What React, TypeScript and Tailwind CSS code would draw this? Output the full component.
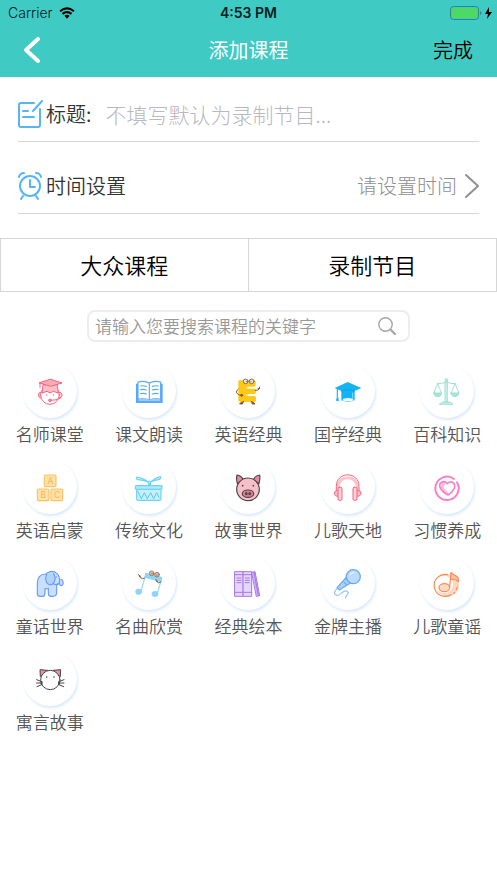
import { ReactNode } from "react";

const pink = "#f5627d";
const blue = "#5aa9f8";
const sky = "#6fd0f8";
const mint = "#8fdccd";
const brown = "#8a5530";
const dark = "#4a4648";

function Glyph({ children }: { children: ReactNode }) {
  return (
    <svg
      viewBox="0 0 84 84"
      className="size-7 overflow-visible"
      fill="none"
      strokeWidth="3.5"
      strokeLinecap="round"
      strokeLinejoin="round"
      aria-hidden="true"
    >
      {children}
    </svg>
  );
}

const Teacher = (
  <Glyph>
    <g stroke={pink} strokeWidth="3">
      <path d="M15 46C5 44 3 62 15 64M70 46c10-2 12 16 0 18" fill="#fbc9d0" />
      <circle cx="42" cy="54" r="28" fill="#fff" />
      <path d="M21 24l-3 24 15-5 9 5 10-5 15 5-3-24z" fill="#fbc0c8" />
      <path d="M44 7L78 18 44 28 10 18z" fill="#f9aab5" />
      <path d="M12 19v12" />
      <path d="M45 70q16 1 29-8" />
      <circle cx="42" cy="70" r="4" fill="#f9aab5" />
    </g>
    <circle cx="32" cy="54" r="2" fill={pink} />
    <circle cx="53" cy="54" r="2" fill={pink} />
  </Glyph>
);

const Book = (
  <Glyph>
    <path d="M3 20h80v58H3z" fill={blue} />
    <path
      d="M9 15q20-5 34 3 14-8 34-3v52q-20-5-34 3-14-8-34-3z"
      fill="#fff"
      stroke={blue}
    />
    <path d="M43 18v50" stroke={blue} />
    <path
      d="M17 27q9-2 17 1M17 38q9-2 17 1M17 50q9-2 17 1M52 28q9-3 17-1M52 39q9-3 17-1M52 51q9-3 17-1"
      stroke={blue}
    />
    <path d="M11 66q18-5 32 3 14-8 32-3v6H11z" fill="#9dccfb" />
  </Glyph>
);

const LetterMonster = (
  <Glyph>
    <path
      d="M15 10h44q6 0 6 6v8q0 5-6 5H37v6h24q5 0 5 6v5q0 5-5 5H37v6h23q6 0 6 6v6q0 6-6 6H19q-6 0-6-6V13q0-3 2-3z"
      fill="#fdc916"
    />
    <path d="M39 29v7M39 51v6" stroke="#eda80b" strokeWidth="2" />
    <g stroke={brown} strokeWidth="3">
      <path d="M13 36C2 44 8 53 20 55M64 40q10 1 12-5l-4-1m4 1l1-5" />
      <path d="M29 73l-4 8h-8q2-5 8-6M52 73l3 8h8q-2-5-8-6" fill={brown} />
      <circle cx="23" cy="55" r="3" fill={brown} />
    </g>
    <g stroke="#7f6a55" strokeWidth="3" fill="#f6ead0">
      <circle cx="35" cy="13" r="7" />
      <circle cx="53" cy="13" r="7" />
    </g>
    <circle cx="37" cy="13" r="1.500" fill={dark} />
    <circle cx="51" cy="13" r="1.500" fill={dark} />
  </Glyph>
);

const GradCap = (
  <Glyph>
    <path d="M41 15L82 33 62 42v28q-20 8-40 0V42L2 33z" fill="#14b4f4" />
    <path d="M22 43q20-10 40 0" stroke="#0a93d4" strokeWidth="2" />
    <ellipse cx="42" cy="68" rx="16" ry="5" fill="#e9f8ff" />
    <path d="M10 36v20" stroke="#14b4f4" />
    <path d="M10 57l-3 14h6z" fill="#14b4f4" stroke="#14b4f4" strokeWidth="2" />
    <path d="M56 48v15" stroke="#7cd7fb" />
  </Glyph>
);

const Scales = (
  <Glyph>
    <g stroke={mint} strokeWidth="2.500">
      <path d="M37 14h6v62h-6z" fill="#c8f0e8" />
      <circle cx="40" cy="9" r="4" fill="#c8f0e8" />
      <path d="M14 20q13 1 23-4M66 20q-13 1-23-4" />
      <path d="M14 20L3 47M14 20l11 27M66 20L55 47M66 20l11 27" />
      <path d="M2 48h24q-2 11-12 11T2 48zM54 48h24q-2 11-12 11T54 48z" fill="#a9e6da" />
      <path d="M29 75h22l9 7H20z" fill="#c8f0e8" />
    </g>
  </Glyph>
);

const Blocks = (
  <Glyph>
    <g fill="#fde2ab" stroke="#fbc264">
      <rect x="25" y="6" width="35" height="35" rx="4" />
      <rect x="4" y="48" width="35" height="35" rx="4" />
      <rect x="45" y="48" width="35" height="35" rx="4" />
    </g>
    <g
      className="font-['Inter',sans-serif] font-medium"
      fill="#f9b955"
      fontSize="25"
      textAnchor="middle"
    >
      <text x="43" y="33">A</text>
      <text x="22" y="75">B</text>
      <text x="63" y="75">C</text>
    </g>
  </Glyph>
);

const Drum = (
  <Glyph>
    <g stroke={sky}>
      <path d="M5 49h73v29q0 4-5 4H10q-5 0-5-4z" fill="#c3f1fc" />
      <path d="M8 55l11 22 9-18 9 18 10-18 9 18 9-18 7 14" stroke="#5fc3f3" strokeWidth="3" />
      <rect x="1" y="38" width="80" height="11" rx="3" fill="#aeeafb" />
      <path d="M5 12q-3 5 3 8 16 0 33 8Q27 16 5 12z" fill="#c3f1fc" />
      <path d="M76 11q3 5-4 9-13 1-27 8 12-12 31-17z" fill="#c3f1fc" />
      <circle cx="43" cy="28" r="4" fill="#fff" />
      <path d="M40 37l3-7 5 7" />
    </g>
  </Glyph>
);

const Pig = (
  <Glyph>
    <g stroke={dark}>
      <path d="M10 32Q6 16 9 6q13 2 19 14zM75 32q4-16 2-26-13 2-19 14z" fill="#e98ba0" />
      <circle cx="42" cy="49" r="34" fill="#f6bfca" />
      <ellipse cx="42" cy="62" rx="17" ry="11" fill="#dd7f92" />
    </g>
    <ellipse cx="37" cy="62" rx="4" ry="5" fill={dark} />
    <ellipse cx="47" cy="62" rx="4" ry="5" fill={dark} />
    <circle cx="26" cy="38" r="2.500" fill={dark} />
    <circle cx="58" cy="38" r="2.500" fill={dark} />
  </Glyph>
);

const Headphones = (
  <Glyph>
    <path d="M12 44C12 4 70 4 70 44" stroke="#fcc5cd" strokeWidth="9" />
    <g stroke={pink} strokeWidth="3">
      <path d="M7 52V40C7-6 75-6 75 40v12" />
      <path d="M12 52q-11 0-11 9t11 9M69 52q12 0 12 9t-12 9" fill="#fbb9c3" />
      <rect x="12" y="43" width="12" height="39" rx="4" fill="#fcd3d9" />
      <rect x="57" y="43" width="12" height="39" rx="4" fill="#fcd3d9" />
    </g>
  </Glyph>
);

const HeartRing = (
  <Glyph>
    <g stroke="#f97fc6">
      <path d="M32 31Q20 45 43 62" stroke="#fcb8df" strokeWidth="8" />
      <path d="M63 18A35 35 0 1 0 72 28" strokeWidth="6" />
      <path
        d="M45 66C22 54 15 37 24 29q10-8 19 3 10-10 19-1c9 9-1 25-17 35z"
        strokeWidth="5"
      />
    </g>
  </Glyph>
);

const Elephant = (
  <Glyph>
    <g stroke="#6a9cf5" fill="#c8e0fd">
      <path d="M31 15Q4 14 4 46v28q0 8 9 8h7q7 0 7-10V59q5 2 10-1v14q0 10 8 10h6q10 0 11-10V50q5-4 8-10 0 11 6 10 7-2 5-12-1-6-6-7" />
      <path d="M33 13Q49 1 63 14q10 8 7 28-10 9-21 1" />
      <path d="M33 13q-7 14-1 28 11 14 22-1 8-14-2-26" fill="#b2d3fc" />
    </g>
    <circle cx="61" cy="24" r="2" fill="#6a9cf5" />
  </Glyph>
);

const MusicNotes = (
  <Glyph>
    <path d="M33 13L18 66M80 28L67 74" stroke="#9fdbf8" strokeWidth="4" />
    <path d="M32 11l50 13-4 15-50-13z" fill="#8bd6fa" />
    <ellipse cx="11" cy="68" rx="10" ry="9" fill="#8fd4f8" />
    <ellipse cx="60" cy="75" rx="10" ry="9" fill="#8fd4f8" />
    <g stroke={brown} strokeWidth="3">
      <path d="M28 28q-14 2-15-8l4 2m-4-2l-2-3M78 39q-9 6-14-3l4 1m-4-1l-1-4" />
    </g>
    <g stroke="#8f7059" strokeWidth="2.500" fill="#d9bfa6">
      <circle cx="50" cy="13" r="7" />
      <circle cx="66" cy="17" r="7" />
    </g>
    <circle cx="51" cy="14" r="1.500" fill={dark} />
    <circle cx="66" cy="18" r="1.500" fill={dark} />
  </Glyph>
);

const Books = (
  <Glyph>
    <g stroke="#a876e6" fill="#e6d6fb" strokeWidth="3">
      <rect x="3" y="8" width="25" height="74" />
      <rect x="28" y="8" width="25" height="74" />
      <path d="M54 10l9-2 14 72-9 2z" fill="#cdb0f4" />
      <path d="M60 10l13 70" />
      <path d="M3 17h50M3 70h50M9 27h12M9 34h12M9 41h12M34 27h12M34 34h12M34 41h12" />
    </g>
  </Glyph>
);

const Microphone = (
  <Glyph>
    <g stroke="#66aaf2">
      <path d="M38 24L9 56l7 7 37-23z" fill="#a8cffa" />
      <circle cx="58" cy="23" r="21" fill="#bcdafb" />
      <path d="M36 24q3 14 18 20M30 40l7 7" />
      <path d="M9 59Q-5 74 7 79c12 4 21-20 33-12 10 9-8 11-5 20" stroke="#8ec5f5" />
    </g>
    <path d="M48 18q4-8 12-7" stroke="#e5f2ff" />
  </Glyph>
);

const Disc = (
  <Glyph>
    <circle cx="44" cy="49" r="34" fill="#fdd9c5" />
    <circle cx="34" cy="46" r="26" fill="#fff" />
    <g stroke="#fa8a4c">
      <path d="M44 17A33 33 0 1 0 54 77M62 73l3-3M70 62l3-8" />
      <ellipse cx="34" cy="56" rx="16" ry="12" fill="#fdd9c5" />
      <path d="M50 55L54 10q7 8 16 11 8 5 6 17-8-8-24-8" fill="#fdc3a4" />
    </g>
  </Glyph>
);

const Cat = (
  <Glyph>
    <g stroke={dark} strokeWidth="3">
      <path d="M13 34l-1-20 22 2zM73 34l1-20-22 2z" fill="#f28ba8" />
      <circle cx="43" cy="45" r="29" fill="#fff" />
      <path d="M2 44l15 6M2 54h14M3 65l14-6M84 44l-15 6M84 54H70M83 65l-14-6" />
    </g>
    <circle cx="32" cy="36" r="2.500" fill={dark} />
    <circle cx="54" cy="36" r="2.500" fill={dark} />
    <ellipse cx="17" cy="54" rx="3" ry="6" fill={dark} />
    <ellipse cx="69" cy="54" rx="3" ry="6" fill={dark} />
  </Glyph>
);

const categories: { name: string; icon: ReactNode }[] = [
  { name: "名师课堂", icon: Teacher },
  { name: "课文朗读", icon: Book },
  { name: "英语经典", icon: LetterMonster },
  { name: "国学经典", icon: GradCap },
  { name: "百科知识", icon: Scales },
  { name: "英语启蒙", icon: Blocks },
  { name: "传统文化", icon: Drum },
  { name: "故事世界", icon: Pig },
  { name: "儿歌天地", icon: Headphones },
  { name: "习惯养成", icon: HeartRing },
  { name: "童话世界", icon: Elephant },
  { name: "名曲欣赏", icon: MusicNotes },
  { name: "经典绘本", icon: Books },
  { name: "金牌主播", icon: Microphone },
  { name: "儿歌童谣", icon: Disc },
  { name: "寓言故事", icon: Cat },
];

function StatusBar() {
  return (
    <div className="grid h-[25px] grid-cols-3 items-center px-2 font-['Inter',sans-serif] text-sm text-[#06201f]">
      <div className="flex items-center gap-1.5">
        <span>Carrier</span>
        <svg viewBox="0 0 17 13" className="h-3 w-4" fill="none" stroke="#000" strokeWidth="2.400" aria-hidden="true">
          <path d="M1 4.600q7.500-6 15 0M3.600 7.400q4.900-3.800 9.800 0" />
          <path d="M5.600 9.600q2.900-2.200 5.800 0L8.500 12.600z" fill="#000" stroke="none" />
        </svg>
      </div>
      <span className="text-center font-semibold">4:53 PM</span>
      <svg viewBox="0 0 43 14" className="-mr-1 h-3.5 w-[43px] justify-self-end" aria-hidden="true">
        <rect x="0.500" y="0.500" width="28" height="13" rx="3" fill="none" stroke="#2b8884" />
        <rect x="2" y="2" width="25" height="10" rx="2" fill="#4cd964" />
        <path d="M30 5q3 2 0 4z" fill="#2b8884" />
        <path d="M39 1l-4 7h3l-1 5 5-7h-3z" fill="#000" />
      </svg>
    </div>
  );
}

export default function App() {
  return (
    <div className="min-h-screen bg-white font-['Noto_Sans_CJK_SC',sans-serif] font-[350] text-[#333]">
      <header className="bg-[#40cac4]">
        <StatusBar />
        <div className="grid h-[52px] grid-cols-3 items-center px-6 pb-[3px] text-[20px] leading-6">
          <button type="button" aria-label="返回" className="justify-self-start">
            <svg viewBox="0 0 16 26" className="h-[26px] w-4" fill="none" stroke="#fff" strokeWidth="4" strokeLinecap="round" strokeLinejoin="round">
              <path d="M14 2L2 13l12 11" />
            </svg>
          </button>
          <h1 className="text-center font-normal text-white">添加课程</h1>
          <button type="button" className="justify-self-end text-black">完成</button>
        </div>
      </header>

      <main>
        <form className="px-[18px]" onSubmit={(e) => e.preventDefault()}>
          <div className="flex h-[65px] items-center border-b border-[#d6d6d6] pt-2.5 text-[20px] leading-7">
            <svg viewBox="0 0 25 28" className="h-7 w-[25px] shrink-0" fill="none" stroke="#55b5f7" strokeWidth="2" strokeLinecap="round" strokeLinejoin="round" aria-hidden="true">
              <path d="M16 3H3q-2 0-2 2v20q0 2 2 2h17q2 0 2-2V9M24 1l-9 10M5 11h5M5 17h11" />
            </svg>
            <label htmlFor="title" className="ml-[3px] shrink-0">标题:</label>
            <input
              id="title"
              type="text"
              placeholder="不填写默认为录制节目..."
              className="ml-3.5 h-8 min-w-0 flex-1 bg-transparent text-[21px] font-light outline-none placeholder:text-[#b8b8be]"
            />
          </div>
          <button
            type="button"
            className="flex h-[72px] w-full items-center border-b border-[#d6d6d6] pt-4 text-[20px] leading-7"
          >
            <svg viewBox="0 0 25 28" className="h-7 w-[25px] shrink-0" fill="none" stroke="#55b5f7" strokeWidth="2" strokeLinecap="round" strokeLinejoin="round" aria-hidden="true">
              <circle cx="12" cy="14" r="10" />
              <path d="M12 8v7h5M1 5q1-4 5-4M23 5q-1-4-5-4M5 24l-2 3M18 24l2 3" />
            </svg>
            <span className="ml-[3px]">时间设置</span>
            <span className="ml-auto font-light text-[#8f8f8f]">请设置时间</span>
            <svg viewBox="0 0 14 26" className="ml-2 h-[26px] w-3.5 shrink-0" fill="none" stroke="#909090" strokeWidth="2" strokeLinecap="round" strokeLinejoin="round" aria-hidden="true">
              <path d="M1 2l12 11L1 24" />
            </svg>
          </button>
        </form>

        <div className="mt-6 grid h-[54px] grid-cols-2 divide-x divide-[#d6d6d6] border border-[#d6d6d6] text-[22px] leading-8 text-black">
          <button type="button" className="pb-[3px]">大众课程</button>
          <button type="button" className="pb-[3px]">录制节目</button>
        </div>

        <form
          role="search"
          className="mx-auto mt-[18px] flex h-8 w-[65%] items-center rounded-lg border-2 border-[#ededed] pr-3 pl-1.5"
          onSubmit={(e) => e.preventDefault()}
        >
          <input
            type="text"
            aria-label="搜索课程"
            placeholder="请输入您要搜索课程的关键字"
            className="h-7 min-w-0 flex-1 bg-transparent pb-0.5 text-[17px] leading-6 outline-none placeholder:text-[#999]"
          />
          <button type="submit" aria-label="搜索">
            <svg viewBox="0 0 18 18" className="size-[18px]" fill="none" stroke="#a6a6a6" strokeLinecap="round">
              <circle cx="7.500" cy="7.500" r="6.700" strokeWidth="1.400" />
              <path d="M12.500 12.500l4.500 4.500" strokeWidth="2.200" />
            </svg>
          </button>
        </form>

        <ul className="mt-[22px] grid grid-cols-5 gap-y-3">
          {categories.map(({ name, icon }) => (
            <li key={name}>
              <button type="button" className="flex h-[84px] w-full flex-col items-center">
                <span className="flex size-[54px] items-center justify-center rounded-full bg-white shadow-[1px_2px_3px_#d9e9fb]">
                  {icon}
                </span>
                <span className="mt-1 text-[17px] leading-6 text-[#555]">{name}</span>
              </button>
            </li>
          ))}
        </ul>
      </main>
    </div>
  );
}
